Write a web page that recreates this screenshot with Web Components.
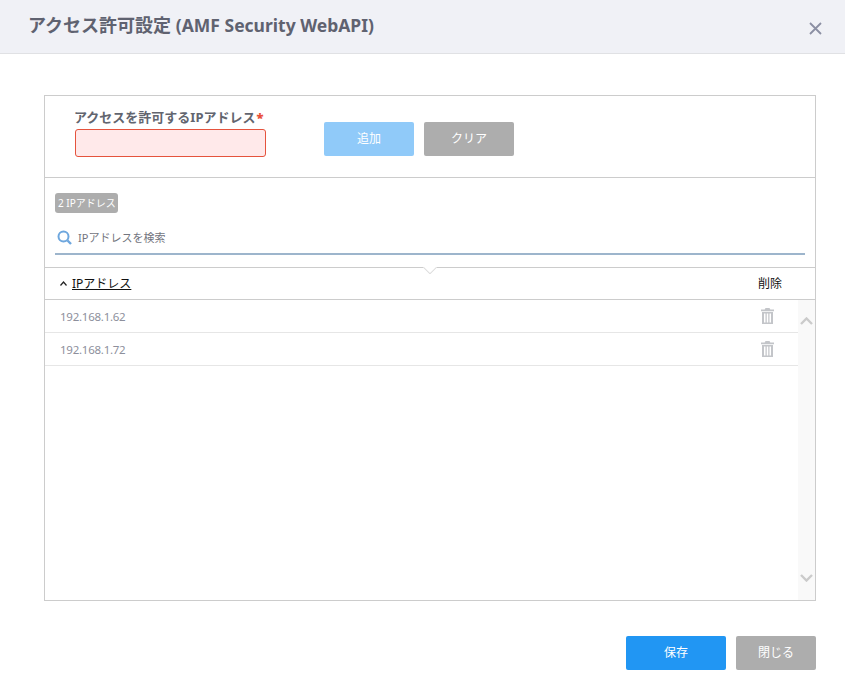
<!DOCTYPE html>
<html lang="ja"><head><meta charset="utf-8"><title>アクセス許可設定</title>
<style>
html,body{margin:0;padding:0;background:#fff}
body{font-family:"Noto Sans","Noto Sans CJK JP",sans-serif}
.lat{font-size:17.5px}
</style></head><body>
<access-dialog>
  <span slot="title">アクセス許可設定 <span class="lat">(AMF Security WebAPI)</span></span>
  <ip-panel>
    <ip-row slot="rows">192.168.1.62</ip-row>
    <ip-row slot="rows">192.168.1.72</ip-row>
  </ip-panel>
  <ui-btn slot="footer" kind="primary" w="100" h="34">保存</ui-btn>
  <ui-btn slot="footer" kind="gray" w="80" h="34">閉じる</ui-btn>
</access-dialog>
<script>
const F='"Noto Sans","Noto Sans CJK JP",sans-serif';
class UiBtn extends HTMLElement{connectedCallback(){
  const c={primary:'#2196f3',light:'#90caf9',gray:'#adadad'}[this.getAttribute('kind')];
  this.attachShadow({mode:'open'}).innerHTML=`<style>:host{display:flex;align-items:center;justify-content:center;
  width:${this.getAttribute('w')}px;height:${this.getAttribute('h')}px;background:${c};color:#fff;border-radius:2px;font:12px/1 ${F};flex:none}</style><slot></slot>`;
}}
class IpRow extends HTMLElement{connectedCallback(){
  this.attachShadow({mode:'open'}).innerHTML=`<style>:host{display:flex;align-items:center;justify-content:space-between;height:32px;border-bottom:1px solid #e6e6e6;padding:0 24px 0 15px;color:#8d8f9c;font:11.5px/1 ${F};letter-spacing:-.25px}
  span{padding-top:2px}
  svg{display:block}</style><span><slot></slot></span>
  <svg width="13" height="16" viewBox="0 0 13 16" fill="#c3c5c9"><path d="M4.500 0h4l.8 1.500H13v1.700H0V1.500h3.700z"/><path fill-rule="evenodd" d="M1 4h11v12H1zM3 5.500v9h1.500v-9zM5.750 5.500v9h1.500v-9zM8.500 5.500v9H10v-9z"/></svg>`;
}}
class IpPanel extends HTMLElement{connectedCallback(){
  this.attachShadow({mode:'open'}).innerHTML=`<style>
  :host{display:flex;flex-direction:column;height:506px;box-sizing:border-box;border:1px solid #ccc;font-family:${F}}
  .form{height:81px;flex:none;border-bottom:1px solid #ccc;display:flex;box-sizing:content-box;padding-left:30px}
  .field{width:191px;padding-top:12px;margin-right:58px}
  label{display:block;font:700 13px/18px ${F};color:#62656f;white-space:nowrap;margin-left:-1px}
  label b{color:#e8503a;margin-left:1px}
  .input{height:28px;box-sizing:border-box;margin-top:3px;background:#ffe9ea;border:1px solid #e5533d;border-radius:3px}
  .btns{display:flex;gap:10px;padding-top:26px}
  .list{padding:15px 10px 0;flex:none}
  .badge{display:flex;align-items:center;box-sizing:border-box;height:20px;width:63px;padding-left:3px;background:#adadad;color:#fff;border-radius:3px;font:10px/1 ${F};white-space:nowrap}
  .search{display:flex;align-items:center;margin-top:8px;border-bottom:2px solid #9db5cc;padding-left:2px;gap:6px;color:#73757e;font:11px/1 ${F};box-sizing:content-box;height:32px}
  .head{position:relative;flex:none;margin-top:12px;height:31px;border-top:1px solid #ccc;border-bottom:1px solid #ccc;display:flex;align-items:center;justify-content:space-between;padding:0 33px 0 15px;font:12px/1 ${F};color:#111}
  .head u{margin-left:5px}
  .sort{display:flex;align-items:center}
  .notch{position:absolute;left:378px;top:-1px;width:14px;height:7px;overflow:hidden;background:#fff}
  .notch i{display:block;width:10px;height:10px;background:#fff;border:1px solid #ddd;transform:rotate(45deg);margin:-7px 0 0 1px}
  .body{flex:1;display:flex;min-height:0}
  .rows{flex:1}
  .bar{width:17px;background:#f9f9f9;flex:none;display:flex;flex-direction:column;justify-content:space-between;align-items:center;padding:17px 0 18px;box-sizing:border-box}
  </style>
  <div class="form"><div class="field"><label>アクセスを許可するIPアドレス<b>*</b></label><div class="input"></div></div>
    <div class="btns"><ui-btn kind="light" w="90" h="34">追加</ui-btn><ui-btn kind="gray" w="90" h="34">クリア</ui-btn></div></div>
  <div class="list"><div class="badge">2 IPアドレス</div>
    <div class="search"><svg width="15" height="15" viewBox="0 0 15 15" fill="none" stroke="#6ea7de"><circle cx="6.500" cy="6.500" r="5" stroke-width="2"/><path d="M10.500 10.500l3.500 3.500" stroke-width="2.400"/></svg><span>IPアドレスを検索</span></div></div>
  <div class="head"><span class="notch"><i></i></span><span class="sort"><svg width="7" height="5" viewBox="0 0 7 5" fill="none" stroke="#222" stroke-width="1.200"><path d="M.5 4.500l3-3.500 3 3.500"/></svg><u>IPアドレス</u></span><span>削除</span></div>
  <div class="body"><div class="rows"><slot name="rows"></slot></div>
    <div class="bar"><svg width="13" height="8" viewBox="0 0 13 8" fill="none" stroke="#cbcbcb" stroke-width="2.400"><path d="M1 7l5.500-5.500L12 7"/></svg><svg width="13" height="8" viewBox="0 0 13 8" fill="none" stroke="#cbcbcb" stroke-width="2.400"><path d="M1 1l5.500 5.500L12 1"/></svg></div></div>`;
}}
class AccessDialog extends HTMLElement{connectedCallback(){
  this.attachShadow({mode:'open'}).innerHTML=`<style>
  :host{display:flex;flex-direction:column;width:845px;height:689px;background:#fff;overflow:hidden}
  header{height:53px;flex:none;box-sizing:content-box;background:#f0f1f6;border-bottom:1px solid #e0e1e4;display:flex;align-items:center;justify-content:space-between;padding:0 23px 0 28px;color:#5f6270;font:700 18px/1 ${F}}
  header slot{display:block;margin-top:-2px}
  header svg{margin-top:3px}
  main{flex:none;padding:41px 29px 0 44px}
  footer{display:flex;justify-content:flex-end;gap:10px;padding:35px 29px 0 0}
  </style>
  <header><slot name="title"></slot><svg width="13" height="13" viewBox="0 0 13 13" stroke="#8b8fa3" stroke-width="1.800"><path d="M1 1l11 11M12 1L1 12"/></svg></header>
  <main><slot></slot></main>
  <footer><slot name="footer"></slot></footer>`;
}}
customElements.define('ui-btn',UiBtn);
customElements.define('ip-row',IpRow);
customElements.define('ip-panel',IpPanel);
customElements.define('access-dialog',AccessDialog);
</script>
</body></html>
